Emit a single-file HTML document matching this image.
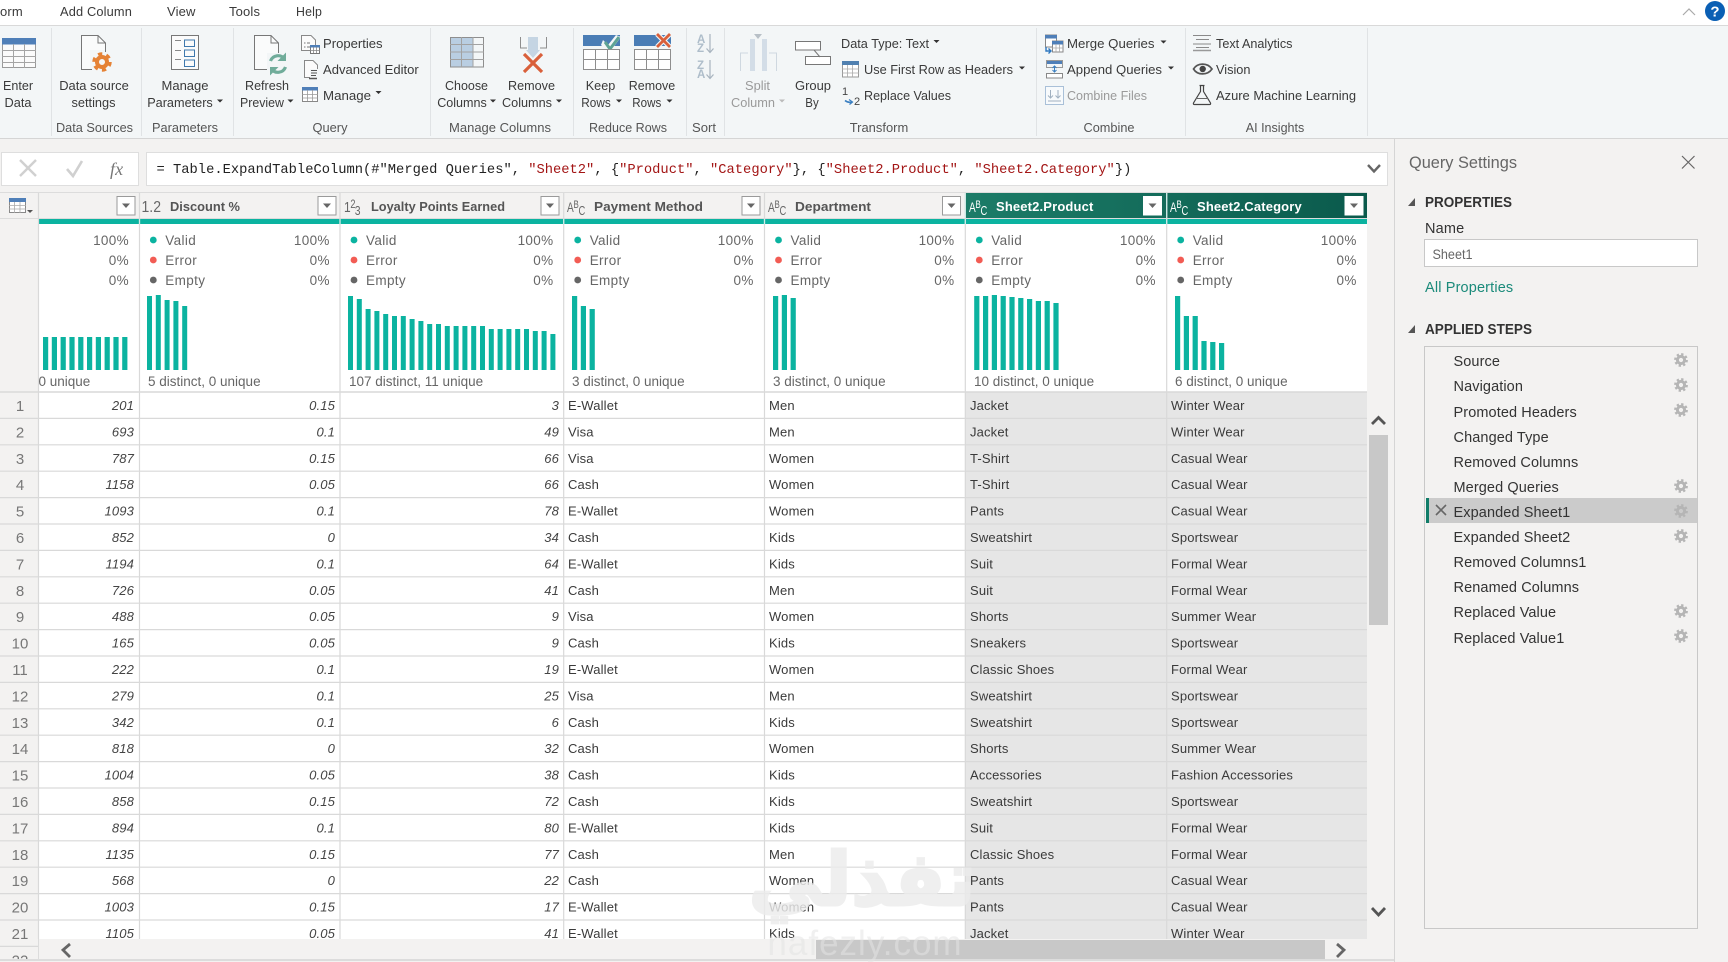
<!DOCTYPE html>
<html><head><meta charset="utf-8"><title>Power Query</title>
<style>
html,body{margin:0;padding:0;background:#fff;overflow:hidden;width:1728px;height:962px}
svg{display:block}
text{font-family:"Liberation Sans",sans-serif;font-size:13px;fill:#3a3a3a;letter-spacing:.15px}
.rb text{letter-spacing:0}
.m{text-anchor:middle}.e{text-anchor:end}
.dis,.rb .dis{fill:#9a9a9a}
.lb,.rb .lb{fill:#555;text-anchor:middle}
.h{font-weight:bold;fill:#555;font-size:13px;letter-spacing:0}
.hw{font-weight:bold;fill:#fff;font-size:13px}
.ty{fill:#666;font-size:14px;letter-spacing:0}.tw{fill:#fff;font-size:14px;letter-spacing:0}
.q{fill:#666;font-size:13.5px;letter-spacing:.35px}
.qd{fill:#666;font-size:13.5px;letter-spacing:0}
.n{font-style:italic;text-anchor:end;fill:#444}
.i{fill:#777;font-size:15px;text-anchor:middle;letter-spacing:0}
.s{font-size:14.5px;fill:#333;letter-spacing:.1px}
.f{font-family:"Liberation Mono",monospace;font-size:13.77px;fill:#222;letter-spacing:0}
.f tspan.r{fill:#a31515}
</style></head><body>
<svg xmlns="http://www.w3.org/2000/svg" width="1728" height="962" viewBox="0 0 1728 962">
<defs>
<clipPath id="grid"><rect x="0" y="392" width="1368" height="547"/></clipPath>
<clipPath id="g22"><rect x="0" y="939" width="38" height="21"/></clipPath>
<clipPath id="c1"><rect x="38" y="224" width="101" height="168"/></clipPath>
<g id="fb"><rect x=".5" y=".5" width="18" height="18.5" fill="#fff" stroke="#9a9a9a"/><path d="M5.5 7.5h8l-4 4.5z" fill="#666"/></g>
<g id="fw"><rect x=".5" y=".5" width="18" height="18.5" fill="#fff" stroke="#fff"/><path d="M5.5 7.5h8l-4 4.5z" fill="#666"/></g>
<g id="gear"><circle r="3.6" fill="none" stroke="#b5b5b5" stroke-width="3"/><circle r="5.8" fill="none" stroke="#b5b5b5" stroke-width="2.2" stroke-dasharray="2.3 2.25"/></g>
<linearGradient id="hg" x1="0" x2="1" y1="0" y2="0"><stop offset="0" stop-color="#1c7c68"/><stop offset="1" stop-color="#0b5a4c"/></linearGradient>
</defs>

<!-- base -->
<rect width="1728" height="962" fill="#f3f2f1"/>
<rect width="1728" height="25" fill="#fff"/>
<rect y="25" width="1728" height="1" fill="#d9d9d9"/>
<rect y="26" width="1728" height="112" fill="#f3f6f7"/>
<rect y="138" width="1728" height="1" fill="#d5d5d5"/>

<!-- menu -->
<text x="0" y="16">orm</text>
<text x="60" y="16" textLength="72" lengthAdjust="spacingAndGlyphs">Add Column</text>
<text x="167" y="16">View</text>
<text x="229" y="16">Tools</text>
<text x="296" y="16" textLength="26" lengthAdjust="spacingAndGlyphs">Help</text>
<path d="M1683 15l6-6 6 6" fill="none" stroke="#aaa" stroke-width="1.2"/>
<circle cx="1715" cy="11" r="10" fill="#0a5fb4"/>
<text x="1715" y="16.5" class="m" style="fill:#fff;font-weight:bold;font-size:15px">?</text>

<!-- ribbon separators -->
<path d="M51.500 28V136M141.500 28V136M233.500 28V136M430.500 28V136M573.500 28V136M686.500 28V136M724.500 28V136M1036.500 28V136M1185.500 28V136M1367.500 28V136" stroke="#e0e3e5"/>

<g class="rb">
<!-- ribbon labels -->
<text x="94.500" y="132" class="lb" textLength="77" lengthAdjust="spacingAndGlyphs">Data Sources</text>
<text x="185" y="132" class="lb" textLength="66" lengthAdjust="spacingAndGlyphs">Parameters</text>
<text x="330" y="132" class="lb" textLength="35" lengthAdjust="spacingAndGlyphs">Query</text>
<text x="500" y="132" class="lb" textLength="102" lengthAdjust="spacingAndGlyphs">Manage Columns</text>
<text x="628" y="132" class="lb" textLength="78" lengthAdjust="spacingAndGlyphs">Reduce Rows</text>
<text x="704" y="132" class="lb" textLength="24" lengthAdjust="spacingAndGlyphs">Sort</text>
<text x="879" y="132" class="lb" textLength="58.500" lengthAdjust="spacingAndGlyphs">Transform</text>
<text x="1109" y="132" class="lb" textLength="51" lengthAdjust="spacingAndGlyphs">Combine</text>
<text x="1275" y="132" class="lb" textLength="58.500" lengthAdjust="spacingAndGlyphs">AI Insights</text>

<!-- ribbon button text -->
<text x="18" y="90" class="m" textLength="30" lengthAdjust="spacingAndGlyphs">Enter</text><text x="18" y="107" class="m" textLength="27" lengthAdjust="spacingAndGlyphs">Data</text>
<text x="94" y="90" class="m" textLength="69.600" lengthAdjust="spacingAndGlyphs">Data source</text><text x="93.500" y="107" class="m" textLength="44" lengthAdjust="spacingAndGlyphs">settings</text>
<text x="185" y="90" class="m" textLength="47" lengthAdjust="spacingAndGlyphs">Manage</text><text x="180" y="107" class="m" textLength="65.600" lengthAdjust="spacingAndGlyphs">Parameters</text>
<text x="267" y="90" class="m" textLength="44" lengthAdjust="spacingAndGlyphs">Refresh</text><text x="262" y="107" class="m" textLength="44" lengthAdjust="spacingAndGlyphs">Preview</text>
<text x="323" y="48" textLength="59.600" lengthAdjust="spacingAndGlyphs">Properties</text>
<text x="323" y="74" textLength="95.700" lengthAdjust="spacingAndGlyphs">Advanced Editor</text>
<text x="323" y="100" textLength="48" lengthAdjust="spacingAndGlyphs">Manage</text>
<text x="466.500" y="90" class="m" textLength="43" lengthAdjust="spacingAndGlyphs">Choose</text><text x="462" y="107" class="m" textLength="49.600" lengthAdjust="spacingAndGlyphs">Columns</text>
<text x="531.500" y="90" class="m" textLength="47" lengthAdjust="spacingAndGlyphs">Remove</text><text x="527" y="107" class="m" textLength="50" lengthAdjust="spacingAndGlyphs">Columns</text>
<text x="600.500" y="90" class="m" textLength="29.500" lengthAdjust="spacingAndGlyphs">Keep</text><text x="596" y="107" class="m" textLength="29.500" lengthAdjust="spacingAndGlyphs">Rows</text>
<text x="652" y="90" class="m" textLength="46.400" lengthAdjust="spacingAndGlyphs">Remove</text><text x="646.800" y="107" class="m" textLength="29" lengthAdjust="spacingAndGlyphs">Rows</text>
<text x="757.500" y="90" class="m dis" textLength="25" lengthAdjust="spacingAndGlyphs">Split</text><text x="753" y="107" class="m dis" textLength="44" lengthAdjust="spacingAndGlyphs">Column</text>
<text x="813" y="90" class="m" textLength="36" lengthAdjust="spacingAndGlyphs">Group</text><text x="812" y="107" class="m" textLength="13.400" lengthAdjust="spacingAndGlyphs">By</text>
<text x="841" y="48" textLength="88" lengthAdjust="spacingAndGlyphs">Data Type: Text</text>
<text x="864" y="74" textLength="149" lengthAdjust="spacingAndGlyphs">Use First Row as Headers</text>
<text x="864" y="100" textLength="87" lengthAdjust="spacingAndGlyphs">Replace Values</text>
<text x="1067" y="48" textLength="87.500" lengthAdjust="spacingAndGlyphs">Merge Queries</text>
<text x="1067" y="74" textLength="95" lengthAdjust="spacingAndGlyphs">Append Queries</text>
<text x="1067" y="100" class="dis" textLength="80" lengthAdjust="spacingAndGlyphs">Combine Files</text>
<text x="1216" y="48" textLength="76.500" lengthAdjust="spacingAndGlyphs">Text Analytics</text>
<text x="1216" y="74" textLength="34.500" lengthAdjust="spacingAndGlyphs">Vision</text>
<text x="1216" y="100" textLength="140" lengthAdjust="spacingAndGlyphs">Azure Machine Learning</text>
</g>
<!-- carets -->
<path d="M217 99.500h6l-3 3zM287.500 99.500h6l-3 3zM375.500 91h6l-3 3zM490 99.500h6l-3 3zM556 99.500h6l-3 3zM616 99.500h6l-3 3zM666.500 99.500h6l-3 3zM933.500 40h6l-3 3zM1019 66.500h6l-3 3zM1160.500 40.500h6l-3 3zM1168 66.500h6l-3 3z" fill="#333"/>
<path d="M779 99.500h6l-3 3z" fill="#bbb"/>

<!-- Enter Data icon -->
<rect x="2.500" y="38.500" width="33" height="29" fill="#fbfbfb" stroke="#9a9a9a"/>
<rect x="2" y="38" width="34" height="6.500" fill="#4f7fb8"/>
<path d="M13.500 44V68M24.500 44V68M2 50.500H36M2 56.500H36M2 62.500H36" stroke="#a5a5a5" fill="none"/>

<!-- Data source settings -->
<path d="M81.500 35.500H98L105.500 43V69.500H81.500Z" fill="#fafbfb" stroke="#777"/>
<path d="M98 35.500V43H105.500" fill="none" stroke="#777"/>
<rect x="90" y="50" width="24" height="24" fill="#f3f6f7"/>
<path d="M105.500 50V52M90 69.500H92" stroke="#777"/>
<circle cx="102" cy="62" r="5" fill="none" stroke="#e58235" stroke-width="4"/>
<circle cx="102" cy="62" r="8" fill="none" stroke="#e58235" stroke-width="3.500" stroke-dasharray="4.200 4.180"/>

<!-- Manage Parameters -->
<rect x="171.500" y="35.500" width="27" height="34" fill="#fbfbfb" stroke="#777"/>
<path d="M175 40.500h6M175 50.500h6M175 59.500h6" stroke="#888"/>
<rect x="184.500" y="40" width="10" height="6.500" fill="none" stroke="#3f78ad"/>
<rect x="184.500" y="50" width="10" height="6.500" fill="none" stroke="#3f78ad"/>
<rect x="184.500" y="60" width="10" height="6.500" fill="none" stroke="#3f78ad"/>

<!-- Refresh Preview -->
<path d="M254.500 35.500H271L278.500 43V69.500H254.500Z" fill="#fafbfb" stroke="#777"/>
<path d="M271 35.500V43H278.500" fill="none" stroke="#777"/>
<rect x="267" y="53" width="22" height="22" fill="#f3f6f7"/>
<path d="M278.500 50V53M267 69.500H263" stroke="#777"/>
<path d="M270.500 61a8 8 0 0 1 14-2" fill="none" stroke="#70ac9a" stroke-width="3.200"/>
<path d="M286 52.500v8.500h-8.500z" fill="#70ac9a"/>
<path d="M285.500 67a8 8 0 0 1-14 2" fill="none" stroke="#70ac9a" stroke-width="3.200"/>
<path d="M270 75.500V67h8.500z" fill="#70ac9a"/>

<!-- Properties small -->
<path d="M301.500 35.500H311L315.500 40V50.500H301.500Z" fill="#fbfbfb" stroke="#888"/>
<path d="M304 43h1.500M304 47h1.500M307 43h3M307 47h3" stroke="#777"/>
<rect x="310.500" y="45.500" width="9" height="8" fill="#fff" stroke="#777"/>
<rect x="310" y="45" width="10" height="2.500" fill="#4f7fb8"/>
<path d="M313.500 47v6M316.500 47v6M310 50.500h10" stroke="#888" stroke-width=".8"/>

<!-- Advanced editor -->
<path d="M304.500 60.500H313L317.500 65V77.500H304.500Z" fill="#fbfbfb" stroke="#888"/>
<rect x="310" y="69" width="10" height="10" fill="#f3f6f7"/>
<path d="M311 70.500h6M311 73h6M311 75.500h5" stroke="#555"/>
<path d="M309 78.500h8" stroke="#555" stroke-width="1.500"/>

<!-- Manage small -->
<rect x="302.500" y="87.500" width="15" height="14" fill="#fff" stroke="#888"/>
<rect x="302" y="87" width="16" height="3.500" fill="#4f7fb8"/>
<path d="M307.500 90v11M312.500 90v11M302 94.500h16M302 98h16" stroke="#999" stroke-width=".8"/>

<!-- Choose Columns -->
<rect x="450" y="37" width="23" height="30" fill="#b9cee2"/>
<rect x="450.500" y="37.500" width="33" height="29.500" fill="none" stroke="#8e8e8e"/>
<path d="M461.500 37V67M473 37V67M450 44.500H484M450 52H484M450 59.500H484" stroke="#a2a2a2"/>

<!-- Remove Columns -->
<path d="M520.500 37V48H527M546.500 37V48H540" fill="none" stroke="#8e8e8e"/>
<rect x="528" y="37" width="10" height="14" fill="#c5d5e3"/>
<path d="M533 58l-7-8h14z" fill="#c5d5e3"/>
<path d="M524 54l18 18M542 54l-18 18" stroke="#d9603b" stroke-width="3.200"/>

<!-- Keep Rows -->
<rect x="583" y="35" width="37" height="11" fill="#4a7db5"/>
<path d="M603 40l-2 5 8 8 12-16-5-2-8 10z" fill="#f3f6f7"/>
<path d="M605 42l5 7 9-12" fill="none" stroke="#5ea394" stroke-width="3"/>
<rect x="583.500" y="49.500" width="36" height="20" fill="#fff" stroke="#8e8e8e"/>
<path d="M595.500 49V70M607.500 49V70M583 59.500H620" stroke="#8e8e8e"/>

<!-- Remove Rows -->
<rect x="634" y="35" width="37" height="11" fill="#4a7db5"/>
<path d="M657 34l13 13M670 34l-13 13" stroke="#f3f6f7" stroke-width="5"/>
<path d="M657 34l13 13M670 34l-13 13" stroke="#d9603b" stroke-width="2.800"/>
<rect x="634.500" y="49.500" width="36" height="20" fill="#fff" stroke="#8e8e8e"/>
<path d="M646.500 49V70M658.500 49V70M634 59.500H671" stroke="#8e8e8e"/>

<!-- Sort -->
<text x="697" y="43" style="font-size:11.5px;font-weight:bold;fill:#aebdca">A</text>
<text x="697" y="52" style="font-size:11.5px;font-weight:bold;fill:#aebdca">Z</text>
<text x="697" y="69" style="font-size:11.5px;font-weight:bold;fill:#aebdca">Z</text>
<text x="697" y="78" style="font-size:11.5px;font-weight:bold;fill:#aebdca">A</text>
<path d="M710 34V52M706.500 48.500l3.500 4 3.500-4M710 60V78M706.500 74.500l3.500 4 3.500-4" fill="none" stroke="#a8b4bf" stroke-width="1.200"/>

<!-- Split Column -->
<rect x="750" y="39" width="5" height="32" fill="#d3dde7"/>
<rect x="762" y="39" width="5" height="32" fill="#d3dde7"/>
<path d="M754 34h8l-4 5z" fill="#b8c0c7"/>
<path d="M740.500 71V53H748M776.500 71V53H769" fill="none" stroke="#cfd8e0"/>

<!-- Group By -->
<rect x="795.500" y="41.500" width="25" height="8.500" fill="#fff" stroke="#777"/>
<rect x="805.500" y="56.500" width="25" height="8" fill="#fff" stroke="#777"/>
<path d="M814 50l6 7" stroke="#777"/>

<!-- First row -->
<rect x="842.500" y="61.500" width="16" height="15.500" fill="#fff" stroke="#999"/>
<rect x="842" y="61" width="17" height="4" fill="#5080b0"/>
<path d="M847.500 65v12M852.500 65v12M842 69h17M842 73h17" stroke="#aaa" stroke-width=".8"/>

<!-- Replace values -->
<text x="842" y="95" style="font-size:11px;fill:#444">1</text>
<text x="854" y="105" style="font-size:11px;fill:#444">2</text>
<path d="M845 100.500q3 2.500 7 1.500" fill="none" stroke="#3a7fc1" stroke-width="1.600"/>
<path d="M849 99.500l3.500 2.500-3 2.500" fill="none" stroke="#3a7fc1" stroke-width="1.200"/>

<!-- Merge -->
<rect x="1045.500" y="35" width="11" height="12" fill="#fff" stroke="#888"/>
<rect x="1045" y="35" width="12" height="3.500" fill="#4f7fb8"/>
<rect x="1052.500" y="41" width="10.500" height="11" fill="#fff" stroke="#888"/>
<rect x="1052" y="41" width="11" height="3.500" fill="#4f7fb8"/>
<path d="M1056 44v8M1059.500 44v8M1052 48h11" stroke="#aaa" stroke-width=".8"/>
<path d="M1046 47v4h4M1048.500 48.500l2.500 2.500-2.500 2.500" fill="none" stroke="#2f78c0" stroke-width="1.400"/>

<!-- Append -->
<rect x="1046" y="60" width="16" height="4" fill="#4f7fb8"/>
<rect x="1046.500" y="60.500" width="16" height="7" fill="none" stroke="#999"/>
<rect x="1046.500" y="73.500" width="16" height="4.500" fill="#fff" stroke="#888"/>
<path d="M1054.500 66v6M1052.500 68l2 -2 2 2M1052.500 70l2 2 2-2" fill="none" stroke="#3a7fc1" stroke-width="1"/>

<!-- Combine files -->
<rect x="1045.500" y="86.500" width="18" height="18" fill="#f7fafc" stroke="#a9c0d8"/>
<path d="M1050.500 90v8M1048 95.500l2.500 2.500 2.500-2.500M1058 90v8M1055.500 95.500l2.500 2.500 2.500-2.500M1048 101h13" fill="none" stroke="#a0b0c0"/>

<!-- Text analytics -->
<path d="M1193 35.500h18M1196 39.500h13M1193 44h18M1196 47.500h13" stroke="#8a8a8a"/>
<path d="M1193 50.500h18" stroke="#999" stroke-width="1.500"/>

<!-- Vision -->
<path d="M1193.500 69c4-6.500 14-6.500 18.500 0c-4.500 6.500-14.500 6.500-18.500 0z" fill="#f3f6f7" stroke="#555" stroke-width="1.700"/>
<circle cx="1202.700" cy="69" r="3.200" fill="#444"/>

<!-- Azure flask -->
<path d="M1199.500 85.500h5M1200.500 85.500v6l-7 11.500q-.5 1.500 1 1.500h15q1.500 0 1-1.500l-7-11.500v-6" fill="none" stroke="#444" stroke-width="1.200"/>
<path d="M1196 98.500h12" stroke="#666"/>

<!-- formula bar -->
<rect x="1.500" y="152.500" width="137" height="33" fill="#fff" stroke="#dedede"/>
<rect x="146.500" y="152.500" width="1241" height="33" fill="#fff" stroke="#dedede"/>
<path d="M20 160l16 16M36 160l-16 16" stroke="#d0d0d0" stroke-width="2.400"/>
<path d="M67 169l6 7 9-15" fill="none" stroke="#d0d0d0" stroke-width="2.600"/>
<text x="110" y="175" style="font-family:'Liberation Serif',serif;font-style:italic;font-size:18px;fill:#777">fx</text>
<text x="156.500" y="173" class="f" xml:space="preserve">= Table.ExpandTableColumn(#"Merged Queries", <tspan class="r">"Sheet2"</tspan>, {<tspan class="r">"Product"</tspan>, <tspan class="r">"Category"</tspan>}, {<tspan class="r">"Sheet2.Product"</tspan>, <tspan class="r">"Sheet2.Category"</tspan>})</text>
<path d="M1368 165l6 6.500 6-6.500" fill="none" stroke="#666" stroke-width="2.400"/>

<!-- grid background -->
<rect x="38" y="224" width="1329" height="715" fill="#fff"/>
<rect x="965" y="392" width="402" height="547" fill="#e6e6e6"/>
<rect x="0" y="192" width="1367" height="1" fill="#dcdcdc"/>
<rect x="0" y="193" width="965" height="25" fill="#f3f2f1"/>
<rect x="965" y="193" width="402" height="25" fill="url(#hg)"/>
<rect x="38" y="219" width="1329" height="5" fill="#0bb3a0"/>
<rect y="218" width="1367" height="1" fill="#dcdcdc"/>

<!-- vertical grid lines -->
<path d="M38.500 193V939M139.500 193V939M340 193V939M563.700 193V939M764.500 193V939M965.300 193V939M1166.700 193V939" stroke="#d9d9d9" stroke-width="1.200"/>
<path d="M139.500 219V224M340 219V224M563.700 219V224M764.500 219V224M965.300 219V224M1166.700 219V224M965.300 193V218M1166.700 193V218" stroke="#cfece8" stroke-width="1.200"/>
<path d="M0 392H1367" stroke="#d9d9d9" stroke-width="1.500"/>

<!-- headers -->
<rect x="9.500" y="198.500" width="16" height="14" fill="#fff" stroke="#888"/>
<rect x="9" y="198" width="17" height="4" fill="#4f7fb8"/>
<path d="M14.500 202v11M20 202v11M9 205.500h17M9 209h17" stroke="#aaa" stroke-width=".8"/>
<path d="M27 210h6l-3 3z" fill="#555"/>

<use href="#fb" x="116.500" y="196"/>
<text x="141.500" y="212" style="font-size:15.500px;fill:#666;letter-spacing:0" textLength="19.500" lengthAdjust="spacingAndGlyphs">1.2</text>
<text x="170" y="211" class="h" textLength="70" lengthAdjust="spacingAndGlyphs">Discount %</text>
<use href="#fb" x="317.500" y="196"/>
<g transform="translate(344 212) scale(.8 1)"><text x="0" y="0" class="ty" style="font-size:15px">1</text><text x="8" y="-4" class="ty" style="font-size:11.500px">2</text><text x="13.500" y="3" class="ty" style="font-size:13px">3</text></g>
<text x="371" y="211" class="h" textLength="134" lengthAdjust="spacingAndGlyphs">Loyalty Points Earned</text>
<use href="#fb" x="540.500" y="196"/>
<g transform="translate(567 212) scale(.72 1)"><text x="0" y="0" class="ty">A</text><text x="9" y="-4" class="ty" style="font-size:11px">B</text><text x="16" y="3" class="ty" style="font-size:13px">C</text></g>
<text x="594" y="211" class="h" textLength="109" lengthAdjust="spacingAndGlyphs">Payment Method</text>
<use href="#fb" x="741.500" y="196"/>
<g transform="translate(768 212) scale(.72 1)"><text x="0" y="0" class="ty">A</text><text x="9" y="-4" class="ty" style="font-size:11px">B</text><text x="16" y="3" class="ty" style="font-size:13px">C</text></g>
<text x="795" y="211" class="h" textLength="76" lengthAdjust="spacingAndGlyphs">Department</text>
<use href="#fb" x="942" y="196"/>
<g transform="translate(969 212) scale(.72 1)"><text x="0" y="0" class="tw">A</text><text x="9" y="-4" class="tw" style="font-size:11px">B</text><text x="16" y="3" class="tw" style="font-size:13px">C</text></g>
<text x="996" y="211" class="hw">Sheet2.Product</text>
<use href="#fw" x="1143" y="196"/>
<g transform="translate(1170 212) scale(.72 1)"><text x="0" y="0" class="tw">A</text><text x="9" y="-4" class="tw" style="font-size:11px">B</text><text x="16" y="3" class="tw" style="font-size:13px">C</text></g>
<text x="1197" y="211" class="hw">Sheet2.Category</text>
<use href="#fw" x="1344.500" y="196"/>

<!-- quality -->
<text x="129" y="245" class="q e">100%</text><text x="129" y="265" class="q e">0%</text><text x="129" y="285" class="q e">0%</text>

<g transform="translate(139.300 0)"><circle cx="14" cy="240" r="3.400" fill="#0bb3a0"/><circle cx="14" cy="260" r="3.400" fill="#f25c54"/><circle cx="14" cy="280" r="3.400" fill="#666"/><text x="26" y="245" class="q">Valid</text><text x="26" y="265" class="q">Error</text><text x="26" y="285" class="q">Empty</text><text x="190.500" y="245" class="q e">100%</text><text x="190.500" y="265" class="q e">0%</text><text x="190.500" y="285" class="q e">0%</text></g>
<g transform="translate(340 0)"><circle cx="14" cy="240" r="3.400" fill="#0bb3a0"/><circle cx="14" cy="260" r="3.400" fill="#f25c54"/><circle cx="14" cy="280" r="3.400" fill="#666"/><text x="26" y="245" class="q">Valid</text><text x="26" y="265" class="q">Error</text><text x="26" y="285" class="q">Empty</text><text x="213.500" y="245" class="q e">100%</text><text x="213.500" y="265" class="q e">0%</text><text x="213.500" y="285" class="q e">0%</text></g>
<g transform="translate(563.700 0)"><circle cx="14" cy="240" r="3.400" fill="#0bb3a0"/><circle cx="14" cy="260" r="3.400" fill="#f25c54"/><circle cx="14" cy="280" r="3.400" fill="#666"/><text x="26" y="245" class="q">Valid</text><text x="26" y="265" class="q">Error</text><text x="26" y="285" class="q">Empty</text><text x="190" y="245" class="q e">100%</text><text x="190" y="265" class="q e">0%</text><text x="190" y="285" class="q e">0%</text></g>
<g transform="translate(764.500 0)"><circle cx="14" cy="240" r="3.400" fill="#0bb3a0"/><circle cx="14" cy="260" r="3.400" fill="#f25c54"/><circle cx="14" cy="280" r="3.400" fill="#666"/><text x="26" y="245" class="q">Valid</text><text x="26" y="265" class="q">Error</text><text x="26" y="285" class="q">Empty</text><text x="190" y="245" class="q e">100%</text><text x="190" y="265" class="q e">0%</text><text x="190" y="285" class="q e">0%</text></g>
<g transform="translate(965.300 0)"><circle cx="14" cy="240" r="3.400" fill="#0bb3a0"/><circle cx="14" cy="260" r="3.400" fill="#f25c54"/><circle cx="14" cy="280" r="3.400" fill="#666"/><text x="26" y="245" class="q">Valid</text><text x="26" y="265" class="q">Error</text><text x="26" y="285" class="q">Empty</text><text x="190.500" y="245" class="q e">100%</text><text x="190.500" y="265" class="q e">0%</text><text x="190.500" y="285" class="q e">0%</text></g>
<g transform="translate(1166.700 0)"><circle cx="14" cy="240" r="3.400" fill="#0bb3a0"/><circle cx="14" cy="260" r="3.400" fill="#f25c54"/><circle cx="14" cy="280" r="3.400" fill="#666"/><text x="26" y="245" class="q">Valid</text><text x="26" y="265" class="q">Error</text><text x="26" y="285" class="q">Empty</text><text x="190" y="245" class="q e">100%</text><text x="190" y="265" class="q e">0%</text><text x="190" y="285" class="q e">0%</text></g>

<!-- bars -->
<g fill="#0bb3a0">
<path d="M43 337h5.200v33h-5.200zM51.800 337h5.200v33h-5.200zM60.600 337h5.200v33h-5.200zM69.400 337h5.200v33h-5.200zM78.200 337h5.200v33h-5.200zM87 337h5.200v33h-5.200zM95.800 337h5.200v33h-5.200zM104.600 337h5.200v33h-5.200zM113.400 337h5.200v33h-5.200zM122.200 337h5.200v33h-5.200z"/>
<path d="M147 296h5v74h-5zM155.800 295h5v75h-5zM164.600 300h5v70h-5zM173.400 301h5v69h-5zM182.200 306h5v64h-5z"/>
<path d="M348 296h5v74h-5zM356.800 299h5v71h-5zM365.600 309h5v61h-5zM374.400 311h5v59h-5zM383.200 314h5v56h-5zM392 316h5v54h-5zM400.800 316h5v54h-5zM409.600 319h5v51h-5zM418.400 321h5v49h-5zM427.200 324h5v46h-5zM436 324h5v46h-5zM444.800 326h5v44h-5zM453.600 326h5v44h-5zM462.400 326h5v44h-5zM471.200 326h5v44h-5zM480 326h5v44h-5zM488.800 329h5v41h-5zM497.600 329h5v41h-5zM506.400 329h5v41h-5zM515.200 329h5v41h-5zM524 329h5v41h-5zM532.800 331h5v39h-5zM541.600 331h5v39h-5zM550.400 334h5v36h-5z"/>
<path d="M572 296h5.200v74h-5.200zM580.800 306h5.200v64h-5.200zM589.600 309h5.200v61h-5.200z"/>
<path d="M773 296h5.200v74h-5.200zM781.800 295h5.200v75h-5.200zM790.600 298h5.200v72h-5.200z"/>
<path d="M974.200 296h5.200v74h-5.200zM983 296h5.200v74h-5.200zM991.800 295h5.200v75h-5.200zM1000.600 296h5.200v74h-5.200zM1009.400 297h5.200v73h-5.200zM1018.200 298h5.200v72h-5.200zM1027 299h5.200v71h-5.200zM1035.800 301h5.200v69h-5.200zM1044.600 301h5.200v69h-5.200zM1053.400 303h5.200v67h-5.200z"/>
<path d="M1175 296h5.200v74h-5.200zM1183.800 316h5.200v54h-5.200zM1192.600 316h5.200v54h-5.200zM1201.400 341h5.200v29h-5.200zM1210.200 342h5.200v28h-5.200zM1219 343h5.200v27h-5.200z"/>
</g>
<g clip-path="url(#c1)"><text x="38.500" y="386" class="qd">0 unique</text></g>
<text x="148" y="386" class="qd">5 distinct, 0 unique</text>
<text x="349" y="386" class="qd">107 distinct, 11 unique</text>
<text x="572" y="386" class="qd">3 distinct, 0 unique</text>
<text x="773" y="386" class="qd">3 distinct, 0 unique</text>
<text x="974" y="386" class="qd">10 distinct, 0 unique</text>
<text x="1175" y="386" class="qd">6 distinct, 0 unique</text>

<!-- rows -->
<g clip-path="url(#grid)">
<path d="M0 418.400H1367M0 444.800H1367M0 471.200H1367M0 497.600H1367M0 524H1367M0 550.400H1367M0 576.800H1367M0 603.200H1367M0 629.600H1367M0 656H1367M0 682.400H1367M0 708.800H1367M0 735.200H1367M0 761.600H1367M0 788H1367M0 814.400H1367M0 840.800H1367M0 867.200H1367M0 893.600H1367M0 920H1367" stroke="#d9d9d9" stroke-width="1.200"/>
<g transform="translate(0 392)"><text x="20" y="19" class="i">1</text><text x="134" y="18" class="n">201</text><text x="335" y="18" class="n">0.15</text><text x="559" y="18" class="n">3</text><text x="568" y="18">E-Wallet</text><text x="769" y="18">Men</text><text x="970" y="18">Jacket</text><text x="1171" y="18">Winter Wear</text></g>
<g transform="translate(0 418.400)"><text x="20" y="19" class="i">2</text><text x="134" y="18" class="n">693</text><text x="335" y="18" class="n">0.1</text><text x="559" y="18" class="n">49</text><text x="568" y="18">Visa</text><text x="769" y="18">Men</text><text x="970" y="18">Jacket</text><text x="1171" y="18">Winter Wear</text></g>
<g transform="translate(0 444.800)"><text x="20" y="19" class="i">3</text><text x="134" y="18" class="n">787</text><text x="335" y="18" class="n">0.15</text><text x="559" y="18" class="n">66</text><text x="568" y="18">Visa</text><text x="769" y="18">Women</text><text x="970" y="18">T-Shirt</text><text x="1171" y="18">Casual Wear</text></g>
<g transform="translate(0 471.200)"><text x="20" y="19" class="i">4</text><text x="134" y="18" class="n">1158</text><text x="335" y="18" class="n">0.05</text><text x="559" y="18" class="n">66</text><text x="568" y="18">Cash</text><text x="769" y="18">Women</text><text x="970" y="18">T-Shirt</text><text x="1171" y="18">Casual Wear</text></g>
<g transform="translate(0 497.600)"><text x="20" y="19" class="i">5</text><text x="134" y="18" class="n">1093</text><text x="335" y="18" class="n">0.1</text><text x="559" y="18" class="n">78</text><text x="568" y="18">E-Wallet</text><text x="769" y="18">Women</text><text x="970" y="18">Pants</text><text x="1171" y="18">Casual Wear</text></g>
<g transform="translate(0 524)"><text x="20" y="19" class="i">6</text><text x="134" y="18" class="n">852</text><text x="335" y="18" class="n">0</text><text x="559" y="18" class="n">34</text><text x="568" y="18">Cash</text><text x="769" y="18">Kids</text><text x="970" y="18">Sweatshirt</text><text x="1171" y="18">Sportswear</text></g>
<g transform="translate(0 550.400)"><text x="20" y="19" class="i">7</text><text x="134" y="18" class="n">1194</text><text x="335" y="18" class="n">0.1</text><text x="559" y="18" class="n">64</text><text x="568" y="18">E-Wallet</text><text x="769" y="18">Kids</text><text x="970" y="18">Suit</text><text x="1171" y="18">Formal Wear</text></g>
<g transform="translate(0 576.800)"><text x="20" y="19" class="i">8</text><text x="134" y="18" class="n">726</text><text x="335" y="18" class="n">0.05</text><text x="559" y="18" class="n">41</text><text x="568" y="18">Cash</text><text x="769" y="18">Men</text><text x="970" y="18">Suit</text><text x="1171" y="18">Formal Wear</text></g>
<g transform="translate(0 603.200)"><text x="20" y="19" class="i">9</text><text x="134" y="18" class="n">488</text><text x="335" y="18" class="n">0.05</text><text x="559" y="18" class="n">9</text><text x="568" y="18">Visa</text><text x="769" y="18">Women</text><text x="970" y="18">Shorts</text><text x="1171" y="18">Summer Wear</text></g>
<g transform="translate(0 629.600)"><text x="20" y="19" class="i">10</text><text x="134" y="18" class="n">165</text><text x="335" y="18" class="n">0.05</text><text x="559" y="18" class="n">9</text><text x="568" y="18">Cash</text><text x="769" y="18">Kids</text><text x="970" y="18">Sneakers</text><text x="1171" y="18">Sportswear</text></g>
<g transform="translate(0 656)"><text x="20" y="19" class="i">11</text><text x="134" y="18" class="n">222</text><text x="335" y="18" class="n">0.1</text><text x="559" y="18" class="n">19</text><text x="568" y="18">E-Wallet</text><text x="769" y="18">Women</text><text x="970" y="18">Classic Shoes</text><text x="1171" y="18">Formal Wear</text></g>
<g transform="translate(0 682.400)"><text x="20" y="19" class="i">12</text><text x="134" y="18" class="n">279</text><text x="335" y="18" class="n">0.1</text><text x="559" y="18" class="n">25</text><text x="568" y="18">Visa</text><text x="769" y="18">Men</text><text x="970" y="18">Sweatshirt</text><text x="1171" y="18">Sportswear</text></g>
<g transform="translate(0 708.800)"><text x="20" y="19" class="i">13</text><text x="134" y="18" class="n">342</text><text x="335" y="18" class="n">0.1</text><text x="559" y="18" class="n">6</text><text x="568" y="18">Cash</text><text x="769" y="18">Kids</text><text x="970" y="18">Sweatshirt</text><text x="1171" y="18">Sportswear</text></g>
<g transform="translate(0 735.200)"><text x="20" y="19" class="i">14</text><text x="134" y="18" class="n">818</text><text x="335" y="18" class="n">0</text><text x="559" y="18" class="n">32</text><text x="568" y="18">Cash</text><text x="769" y="18">Women</text><text x="970" y="18">Shorts</text><text x="1171" y="18">Summer Wear</text></g>
<g transform="translate(0 761.600)"><text x="20" y="19" class="i">15</text><text x="134" y="18" class="n">1004</text><text x="335" y="18" class="n">0.05</text><text x="559" y="18" class="n">38</text><text x="568" y="18">Cash</text><text x="769" y="18">Kids</text><text x="970" y="18">Accessories</text><text x="1171" y="18">Fashion Accessories</text></g>
<g transform="translate(0 788)"><text x="20" y="19" class="i">16</text><text x="134" y="18" class="n">858</text><text x="335" y="18" class="n">0.15</text><text x="559" y="18" class="n">72</text><text x="568" y="18">Cash</text><text x="769" y="18">Kids</text><text x="970" y="18">Sweatshirt</text><text x="1171" y="18">Sportswear</text></g>
<g transform="translate(0 814.400)"><text x="20" y="19" class="i">17</text><text x="134" y="18" class="n">894</text><text x="335" y="18" class="n">0.1</text><text x="559" y="18" class="n">80</text><text x="568" y="18">E-Wallet</text><text x="769" y="18">Kids</text><text x="970" y="18">Suit</text><text x="1171" y="18">Formal Wear</text></g>
<g transform="translate(0 840.800)"><text x="20" y="19" class="i">18</text><text x="134" y="18" class="n">1135</text><text x="335" y="18" class="n">0.15</text><text x="559" y="18" class="n">77</text><text x="568" y="18">Cash</text><text x="769" y="18">Men</text><text x="970" y="18">Classic Shoes</text><text x="1171" y="18">Formal Wear</text></g>
<g transform="translate(0 867.200)"><text x="20" y="19" class="i">19</text><text x="134" y="18" class="n">568</text><text x="335" y="18" class="n">0</text><text x="559" y="18" class="n">22</text><text x="568" y="18">Cash</text><text x="769" y="18">Women</text><text x="970" y="18">Pants</text><text x="1171" y="18">Casual Wear</text></g>
<g transform="translate(0 893.600)"><text x="20" y="19" class="i">20</text><text x="134" y="18" class="n">1003</text><text x="335" y="18" class="n">0.15</text><text x="559" y="18" class="n">17</text><text x="568" y="18">E-Wallet</text><text x="769" y="18">Women</text><text x="970" y="18">Pants</text><text x="1171" y="18">Casual Wear</text></g>
<g transform="translate(0 920)"><text x="20" y="19" class="i">21</text><text x="134" y="18" class="n">1105</text><text x="335" y="18" class="n">0.05</text><text x="559" y="18" class="n">41</text><text x="568" y="18">E-Wallet</text><text x="769" y="18">Kids</text><text x="970" y="18">Jacket</text><text x="1171" y="18">Winter Wear</text></g>
</g>

<!-- bottom of grid -->
<rect x="38" y="939" width="1329" height="20" fill="#f3f2f1"/>
<path d="M0 946.400H38" stroke="#d9d9d9" stroke-width="1.200"/>
<g clip-path="url(#g22)"><text x="20" y="965.400" class="i">22</text></g>
<rect x="0" y="959" width="1394" height="2" fill="#dcdcdc"/>
<rect x="38" y="939" width="1" height="20" fill="#dcdcdc"/>
<rect x="816" y="940" width="509" height="19" fill="#c8c8c8"/>
<path d="M70 944l-7 6 7 7" fill="none" stroke="#666" stroke-width="2.800"/>
<path d="M1337 944l7 6-7 7" fill="none" stroke="#666" stroke-width="2.800"/>

<!-- vertical scrollbar -->
<rect x="1369" y="435" width="19" height="190" fill="#c8c8c8"/>
<path d="M1372 424l6.500-6.500 6.500 6.500" fill="none" stroke="#555" stroke-width="2.800"/>
<path d="M1372 908l6.500 7 6.500-7" fill="none" stroke="#555" stroke-width="2.800"/>

<!-- watermark -->
<text x="862" y="905" class="m" style="font-family:'DejaVu Sans',sans-serif;font-weight:bold;font-size:74px;fill:#ececec;stroke:#ececec;stroke-width:3px;opacity:.82;letter-spacing:0" direction="rtl">تفذلي</text>
<text x="865" y="955" class="m" style="font-size:35px;fill:#e4e4e4;opacity:.55;letter-spacing:1px">nafezly.com</text>

<!-- query settings -->
<rect x="1394" y="139" width="1" height="823" fill="#d5d5d5"/>
<text x="1409" y="168" style="font-size:17px;fill:#666;letter-spacing:0" textLength="108" lengthAdjust="spacingAndGlyphs">Query Settings</text>
<path d="M1682 156l12.500 12.500M1694.500 156l-12.500 12.500" stroke="#666" stroke-width="1.200"/>
<path d="M1415 198v8h-7z" fill="#555"/>
<text x="1425" y="207" style="font-size:14.5px;font-weight:bold;fill:#333;letter-spacing:0" textLength="87" lengthAdjust="spacingAndGlyphs">PROPERTIES</text>
<text x="1425" y="233" style="font-size:14.5px;fill:#333">Name</text>
<rect x="1424.500" y="239.500" width="273" height="27" fill="#fff" stroke="#c8c8c8"/>
<text x="1432.500" y="259" style="font-size:14px;fill:#666;letter-spacing:0" textLength="40" lengthAdjust="spacingAndGlyphs">Sheet1</text>
<text x="1425" y="292" style="font-size:14.5px;fill:#1a8a7a">All Properties</text>
<path d="M1415 325v8h-7z" fill="#555"/>
<text x="1425" y="334" style="font-size:14.5px;font-weight:bold;fill:#333;letter-spacing:0" textLength="107" lengthAdjust="spacingAndGlyphs">APPLIED STEPS</text>
<rect x="1424.500" y="346.500" width="273" height="582" fill="#f3f2f1" stroke="#c8c8c8"/>
<rect x="1427" y="498" width="270" height="25" fill="#cbcbcb"/>
<rect x="1426" y="498" width="3" height="25" fill="#107c68"/>
<path d="M1436 505l10 10M1446 505l-10 10" stroke="#666" stroke-width="1.600"/>
<text x="1453.500" y="366" class="s">Source</text>
<text x="1453.500" y="391" class="s">Navigation</text>
<text x="1453.500" y="417" class="s">Promoted Headers</text>
<text x="1453.500" y="442" class="s">Changed Type</text>
<text x="1453.500" y="467" class="s">Removed Columns</text>
<text x="1453.500" y="492" class="s">Merged Queries</text>
<text x="1453.500" y="517" class="s">Expanded Sheet1</text>
<text x="1453.500" y="542" class="s">Expanded Sheet2</text>
<text x="1453.500" y="567" class="s">Removed Columns1</text>
<text x="1453.500" y="592" class="s">Renamed Columns</text>
<text x="1453.500" y="617" class="s">Replaced Value</text>
<text x="1453.500" y="643" class="s">Replaced Value1</text>
<use href="#gear" x="1681" y="360"/>
<use href="#gear" x="1681" y="385"/>
<use href="#gear" x="1681" y="410"/>
<use href="#gear" x="1681" y="486"/>
<use href="#gear" x="1681" y="511"/>
<use href="#gear" x="1681" y="536"/>
<use href="#gear" x="1681" y="611"/>
<use href="#gear" x="1681" y="636"/>
</svg>
</body></html>
